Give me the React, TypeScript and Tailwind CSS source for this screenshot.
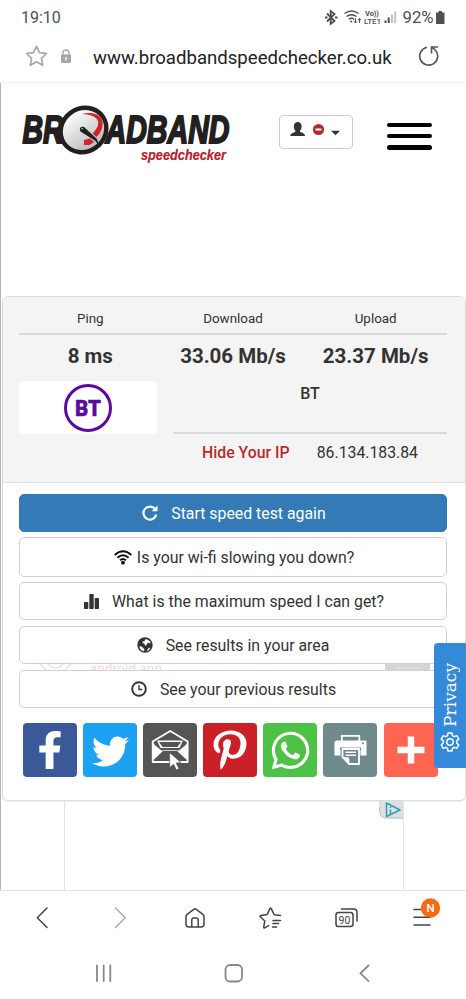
import React from 'react';
import { FaFacebookF, FaPinterestP, FaTwitter, FaWhatsapp } from 'react-icons/fa';

const StatusBar: React.FC = () => (
  <div className="flex h-9 shrink-0 items-center justify-between pl-[21px] pr-[20px] text-[#505050]">
    <span className="text-[16px] leading-none">19:10</span>
    <svg width="122" height="20" viewBox="325 8 122 20" fill="none" stroke="#505050">
      {/* bluetooth */}
      <path d="M328 13.500l7.500 7.500-3.800 3V11l3.800 3-7.500 7.500" strokeWidth="1.800" />
      <path d="M326 17.500h2.500M336 17.500h2.500" strokeWidth="2.200" />
      {/* wifi */}
      <path d="M345.500 13.500q7-5 14 0M347.500 16.500q5-3.500 10 0M349.700 19.200q2.800-2 5.600 0" strokeWidth="1.400" />
      <circle cx="352.300" cy="21.500" r="1" fill="#505050" stroke="none" />
      <path d="M356.500 18.500v4.500m-1.500-1.500l1.500 1.500 1.500-1.500M360.500 23v-4.500m-1.500 1.500l1.500-1.500 1.500 1.500" strokeWidth="1" />
      <g fill="#505050" stroke="none" fontFamily="Roboto, sans-serif">
        <text x="366" y="16.300" fontSize="7.500" fontWeight="700" textLength="14">Vo))</text>
        <text x="365" y="23.500" fontSize="8" fontWeight="500" textLength="17">LTE1</text>
        <rect x="385.500" y="20.500" width="2" height="2.500" />
        <rect x="388.700" y="17.500" width="2" height="5.500" />
        <rect x="392" y="14.500" width="2" height="8.500" fill="#c4c4c4" />
        <rect x="395.200" y="11.500" width="2" height="11.500" fill="#c4c4c4" />
        <text x="403.500" y="23.300" fontSize="16" textLength="31" lengthAdjust="spacingAndGlyphs">92%</text>
        <path d="M437 12.500h2.500V11h3.500v1.500h2.500v11.500H437z" />
      </g>
    </svg>
  </div>
);

const AddressBar: React.FC = () => (
  <div className="flex h-[47px] shrink-0 items-center border-b border-[#f1f1f1] pb-[6px] pl-[25px]">
    <svg width="23" height="22" viewBox="0 0 23 22" fill="none" stroke="#a6a6a6" strokeWidth="1.600" strokeLinejoin="round">
      <path d="M11.500 1.300l3 6.300 7 .9-5.100 4.800 1.300 7-6.200-3.500-6.200 3.500 1.300-7L1.500 8.500l7-.9z" />
    </svg>
    <svg className="ml-[12px]" width="12" height="14" viewBox="0 0 12 14">
      <path d="M3 6V4a3 3 0 0 1 6 0v2" fill="none" stroke="#aaa" strokeWidth="1.400" />
      <rect x="1" y="5.500" width="10" height="8.500" rx="1" fill="#a6a6a6" />
      <path d="M6 8v3.500" stroke="#fff" strokeWidth="1.300" />
    </svg>
    <span className="ml-[21px] w-[299px] whitespace-nowrap pt-[3px] text-[18.600px] leading-[20px] text-[#222]">
      www.broadbandspeedchecker.co.uk
    </span>
    <svg className="ml-[26px]" width="22" height="22" viewBox="0 0 22 22" fill="none" stroke="#555" strokeWidth="1.600">
      <path d="M9 2.300A9 9 0 1 0 17 4.700L14 2.500" />
      <path d="M20 2h-6.500v6.500" />
    </svg>
  </div>
);

const Logo: React.FC = () => (
  <svg className="overflow-visible" width="212" height="62" viewBox="20 104 212 62">
    <defs>
      <linearGradient id="dial" x1="0" y1="0" x2="0" y2="1">
        <stop offset="0" stopColor="#fff" />
        <stop offset="1" stopColor="#b7b9bb" />
      </linearGradient>
    </defs>
    <g fontFamily="'Liberation Sans', Arial, sans-serif" fontWeight="700" fontStyle="italic">
      <g fill="#231f20" stroke="#231f20" strokeWidth="2" fontSize="39">
        <text x="22.500" y="143" textLength="41" lengthAdjust="spacingAndGlyphs">BR</text>
        <text x="105.500" y="143" textLength="124" lengthAdjust="spacingAndGlyphs">ADBAND</text>
      </g>
      <text x="141" y="159.500" fontSize="15" fill="#b5202b" stroke="#b5202b" strokeWidth=".2" textLength="85" lengthAdjust="spacingAndGlyphs">
        speedchecker
      </text>
    </g>
    <ellipse cx="83.500" cy="130" rx="23.500" ry="21.500" transform="rotate(-35 83.500 130)" fill="url(#dial)" stroke="#231f20" strokeWidth="4.400" />
    <path d="M82 114c13-3.500 22 2 20.500 12-.8 5-3.500 8.500-6 11l-4-3.500c5-5 7-9.500 5-13.500-2.300-4-8-5.500-15.500-6z" fill="#d2232a" />
    <path d="M84 140l6-1.500 4 3.500-4.500 3H84z" fill="#d2232a" />
    <path d="M80.500 131.500l3.500-4.500 12.500 11.500 4.500 10-5.500-7.500z" fill="#231f20" />
    <circle cx="82.500" cy="129.300" r="2.600" fill="#231f20" />
    <circle cx="82.200" cy="128.800" r=".8" fill="#ccc" />
  </svg>
);

const SiteHeader: React.FC = () => (
  <header className="flex h-[213px] shrink-0 items-start pl-[19px] pt-[21px]">
    <Logo />
    <button className="ml-[47px] mt-[11px] flex h-[34px] w-[74px] items-center justify-center rounded-[4px] border border-[#ccc]" aria-label="Account">
      <svg className="shrink-0" width="72" height="32" viewBox="280 116 72 32">
        <path d="M293.800 126.500c0-3 1.500-4.500 3.900-4.500s3.900 1.500 3.900 4.500c0 2-.8 3.500-1.600 4.300v1c1.800.9 5 1.700 5 4.200h-14.600c0-2.500 3.200-3.300 5-4.200v-1c-.8-.8-1.600-2.300-1.600-4.300z" fill="#333" />
        <circle cx="318.500" cy="129.500" r="5.600" fill="#b02a33" />
        <path d="M315.500 129.500h6" stroke="#fff" strokeWidth="2" />
        <path d="M331 130.800h9l-4.500 4.500z" fill="#333" />
      </svg>
    </button>
    <div className="ml-[34px] mt-[18.500px] flex w-[45px] flex-col gap-[6.500px]">
      <span className="h-[4.700px] rounded-full bg-black" />
      <span className="h-[4.700px] rounded-full bg-black" />
      <span className="h-[4.700px] rounded-full bg-black" />
    </div>
  </header>
);

const Results: React.FC = () => (
  <section className="h-[186px] rounded-t-[6px] border-b border-[#dfe0e2] bg-[#f4f4f4] pl-[16px] pr-[18px] text-[#333]">
    <div className="grid h-[38px] grid-cols-3 border-b-2 border-[#d9dadb] pt-[14px] text-center text-[13.400px] leading-[15px]">
      <span>Ping</span>
      <span>Download</span>
      <span>Upload</span>
    </div>
    <div className="grid h-[45px] grid-cols-3 whitespace-nowrap pt-[9px] text-center text-[20.500px] font-bold leading-[24px]">
      <span>8 ms</span>
      <span>33.06 Mb/s</span>
      <span>23.37 Mb/s</span>
    </div>
    <div className="flex justify-between">
      <div className="mt-px flex h-[53px] w-[138px] items-center justify-center rounded-[4px] bg-white">
        <svg width="50" height="50" viewBox="0 0 50 50">
          <circle cx="25" cy="25" r="22.500" fill="none" stroke="#5a0a9c" strokeWidth="3" />
          <text x="12" y="33" fill="#5a0a9c" stroke="#5a0a9c" strokeWidth=".4" fontFamily="Roboto, sans-serif" fontSize="22" fontWeight="900" textLength="26" lengthAdjust="spacingAndGlyphs">
            BT
          </text>
        </svg>
      </div>
      <div className="w-[274px]">
        <div className="h-[54px] border-b-2 border-[#d9dadb] pt-[4px] text-center text-[16px] font-medium leading-[20px]">BT</div>
        <div className="flex justify-between whitespace-nowrap px-[29px] pt-[9px] text-[15.800px] leading-[20px]">
          <span className="font-medium text-[#b52b2b]">Hide Your IP</span>
          <span>86.134.183.84</span>
        </div>
      </div>
    </div>
  </section>
);

const RefreshIcon = () => (
  <svg width="16" height="16" viewBox="0 0 16 16" fill="none" stroke="#fff" strokeWidth="2.200">
    <path d="M13.200 4.200A6.500 6.500 0 1 0 14.300 9.500" />
    <path d="M15.500.5v5.800H9.700z" fill="#fff" stroke="none" />
  </svg>
);

const WifiIcon = () => (
  <svg width="18" height="15" viewBox="0 0 18 15" fill="none" stroke="#111" strokeWidth="1.900">
    <path d="M.7 5q8.300-7.300 16.600 0M3.400 7.700q5.600-4.900 11.200 0M6 10.300q3-2.600 6 0" />
    <circle cx="9" cy="12.700" r="1.900" fill="#111" stroke="none" />
  </svg>
);

const ChartIcon = () => (
  <svg width="16" height="15" viewBox="0 0 16 15" fill="#333">
    <rect x="0" y="8" width="4.300" height="7" rx=".7" />
    <rect x="5.300" y="0" width="4.400" height="15" rx=".7" />
    <rect x="10.700" y="4" width="4.300" height="11" rx=".7" />
  </svg>
);

const GlobeIcon = () => (
  <svg width="16" height="16" viewBox="0 0 16 16">
    <circle cx="8" cy="8" r="7.700" fill="#333" />
    <path d="M8.300 2.200l2.300.3 2.900 2.300-.3 1.700-1.900-.7-1.500 1-.2 1.700-1.700-.3-.7-1.700-1.700-.5.300-1.500 1.700-.3z" fill="#fff" />
    <path d="M2.300 9.300l2.200.3 2 1.600 1 1.500-.5 1.500-2.300-.8-1.800-2zM10.500 12.500l1.500-1.700 1.300.3-1.300 1.900-2.200 1.200z" fill="#fff" />
  </svg>
);

const ClockIcon = () => (
  <svg width="16" height="16" viewBox="0 0 16 16" fill="none" stroke="#333">
    <circle cx="8" cy="8" r="6.800" strokeWidth="1.900" />
    <path d="M8 4v4.500h3.300" strokeWidth="1.300" />
  </svg>
);

interface ActionButtonProps {
  icon: React.ReactNode;
  label: string;
  className: string;
}

const ActionButton: React.FC<ActionButtonProps> = ({ icon, label, className }) => (
  <button className={`flex w-full items-center justify-center whitespace-nowrap rounded-[5px] border text-[15.850px] leading-[20px] ${className}`}>
    {icon}
    <span className="pt-px">{label}</span>
  </button>
);

const Actions: React.FC = () => (
  <div className="pl-[16px] pr-[18px] pt-[11px]">
    <ActionButton icon={<RefreshIcon />} label="Start speed test again" className="h-[38px] gap-[13px] border-[#337ab7] bg-[#337ab7] pl-[2px] text-white" />
    <ActionButton icon={<WifiIcon />} label="Is your wi-fi slowing you down?" className="mt-[5px] h-[40px] gap-[5px] border-[#d0d1d2] bg-white pl-[2px] text-[#333]" />
    <ActionButton icon={<ChartIcon />} label="What is the maximum speed I can get?" className="mt-[5px] h-[38px] gap-[12px] border-[#d0d1d2] bg-white pl-[2px] text-[#333]" />
    <ActionButton icon={<GlobeIcon />} label="See results in your area" className="mt-[6px] h-[38px] gap-[13px] border-[#d0d1d2] bg-white text-[#333]" />
    {/* ad content showing through the gap */}
    <div className="flex h-[6px] items-end overflow-hidden pl-[21px]">
      <svg className="shrink-0" width="390" height="6" viewBox="40 664 390 6">
        <path d="M40 664l6 6M71 664l-6 6M48 664q8 8 15 0" fill="none" stroke="#f6dfd6" strokeWidth="1.500" />
        <text x="90" y="672.500" fontFamily="Roboto, sans-serif" fontSize="13" fill="#f0d8d8" textLength="72">android app</text>
        <path d="M385 664h45v6h-45z" fill="#d5d5d5" />
        <path d="M397 668h22" stroke="#e8e8e8" strokeDasharray="3 1" />
      </svg>
    </div>
    <ActionButton icon={<ClockIcon />} label="See your previous results" className="h-[38px] gap-[13px] border-[#d0d1d2] bg-white pl-[1px] text-[#333]" />
  </div>
);

const MailIcon = () => (
  <svg width="54" height="54" viewBox="143 723 54 54">
    <path d="M152.700 741.500v20.500h35v-20.500l-17.500-10.500z" fill="none" stroke="#fff" strokeWidth="1.800" strokeLinejoin="round" />
    <path d="M153 743l6.500 7.500h21.500l6.500-7.500v13l-7-5h-20l-7.500 5z" fill="#fff" />
    <path d="M153 760.500l10.500-10h13l11 10v-17l-9 7.500h-16.500l-9-7.500z" fill="#fff" />
    <path d="M155 760.800l9.500-7.300h12l9.500 7.300z" fill="#555" />
    <path d="M157 740.500h26l-3.500 7.500h-19z" fill="#fff" />
    <path d="M159 742h22l-3.500 5h-15z" fill="#555" />
    <path d="M169.500 752.500l11.500 10-4.800.5 2.800 5.700-2.700 1.300-2.700-5.700-3.800 3.200z" fill="#fff" stroke="#555" strokeWidth=".7" />
  </svg>
);

const PrintIcon = () => (
  <svg width="54" height="54" viewBox="324 723 54 54">
    <path d="M342.800 741v-5.200h17.500v5.200" fill="none" stroke="#fff" strokeWidth="1.800" />
    <path d="M337 740.500h29.500q1 0 1 1v14h-6v-6.500h-20v6.500h-6v-13.500z" fill="#fff" />
    <path d="M341 747.500h21v2.500h-21z" fill="#6e8a8b" />
    <path d="M343.500 749h16.500v15h-10l-6.500-7z" fill="#6e8a8b" stroke="#fff" strokeWidth="1.800" />
    <path d="M346.500 752.200h10.500M346.500 755.200h10.500" stroke="#fff" strokeWidth="1.400" />
    <path d="M342 756.500l8 1 .8 7.500z" fill="#fff" />
    <circle cx="364" cy="743.300" r="1" fill="#6e8a8b" />
  </svg>
);

const PlusIcon = () => (
  <svg width="28" height="28" viewBox="0 0 28 28" stroke="#fff" strokeWidth="6.500">
    <path d="M14 .5v27M.5 14h27" />
  </svg>
);

const tile = 'flex size-[54px] shrink-0 items-center justify-center rounded-[4px] text-white';

const ShareRow: React.FC = () => (
  <div className="mt-[15px] flex gap-[6.100px] pl-[20px]">
    <div className={`${tile} bg-[#3b5998]`}><FaFacebookF size={38} className="scale-x-105" /></div>
    <div className={`${tile} bg-[#1da1f2]`}><FaTwitter size={37} className="translate-y-[1px]" /></div>
    <div className={`${tile} bg-[#555]`}><MailIcon /></div>
    <div className={`${tile} bg-[#cb2027]`}><FaPinterestP size={40} className="scale-x-110" /></div>
    <div className={`${tile} bg-[#4dc247]`}><FaWhatsapp size={43} /></div>
    <div className={`${tile} bg-[#6e8a8b]`}><PrintIcon /></div>
    <div className={`${tile} bg-[#ff6550]`}><PlusIcon /></div>
  </div>
);

const PrivacyTab: React.FC = () => (
  <div className="absolute right-0 top-[643px] flex h-[125px] w-[32px] flex-col items-center justify-end gap-[5px] rounded-l-[4px] bg-[#3489d8] pb-[16px] text-white">
    <span className="rotate-180 font-['DejaVu_Serif',serif] text-[17px] leading-[20px] [writing-mode:vertical-rl]">Privacy</span>
    <svg width="20" height="20" viewBox="0 0 20 20" fill="none" stroke="#fff" strokeWidth="1.400" strokeLinejoin="round">
      <path d="M8 1h4l.5 2.700 1.700 1 2.600-1 2 3.400-2.100 1.800v2.200l2.100 1.800-2 3.400-2.600-1-1.700 1L12 19H8l-.5-2.700-1.700-1-2.600 1-2-3.400 2.100-1.800V8.900L1.200 7.100l2-3.400 2.600 1 1.700-1z" />
      <circle cx="10" cy="10" r="3.200" />
    </svg>
  </div>
);

const AdSlot: React.FC = () => (
  <div className="ml-[63px] flex h-[89px] w-[340px] justify-end border-x border-[#e2e3e4]">
    <svg width="24" height="18" viewBox="0 0 24 18">
      <path d="M0 0h24v17.500H7Q0 17 0 9z" fill="#dedfe1" />
      <path d="M.5 6v3q0 7.500 7 8h16.500" fill="none" stroke="#bfc1c3" />
      <path d="M7.500 2l13.500 7-13.500 6.500z" fill="none" stroke="#2d9fb4" strokeWidth="1.500" strokeLinejoin="round" />
      <path d="M11.500 8.500V13M11.500 5.500v1.500" stroke="#2d9fb4" strokeWidth="1.500" />
    </svg>
  </div>
);

const BrowserToolbar: React.FC = () => (
  <nav className="h-[55px] shrink-0 border-t border-[#e3e3e3]">
    <svg width="466" height="54" viewBox="0 891 466 54" fill="none" stroke="#444" strokeWidth="1.500" strokeLinecap="round" strokeLinejoin="round">
      <path d="M47 908l-9.700 9.700L47 927.500" />
      <path d="M115.500 908l9.700 9.700-9.700 9.800" stroke="#aaa" />
      <path d="M186 916.500c0-1 .4-1.700 1.100-2.200l6.700-5c.8-.6 1.700-.6 2.500 0l6.600 5c.7.500 1.100 1.200 1.100 2.200v7.500c0 1.800-1 3-3 3h-12c-2 0-3-1.200-3-3z" />
      <path d="M191.800 926.500V920c0-1.300.7-2 2-2h2.400c1.300 0 2 .7 2 2v6.500" />
      <path d="M280.500 915.500l-6.300-.8-3-6c-.5-.8-.9-.8-1.300 0l-2.800 5.900-6.300.9c-.9.100-1.100.6-.5 1.200l4.500 4.300-1.100 6c-.2.900.3 1.200 1 .8l4-2.200M273 920.500h7.500M273 923.500h5.500M272.500 927h4" />
      <rect x="336" y="912.500" width="17" height="14" rx="2.500" />
      <path d="M341.500 909h12c2.500 0 3.500 1.200 3.500 3.500v8.500" />
      <text x="338.500" y="923.500" fill="#444" stroke="none" fontFamily="Roboto, sans-serif" fontSize="10.500" textLength="12">90</text>
      <path d="M414 909.500h16M414 917.200h16M414 925h16" />
      <circle cx="430.500" cy="908" r="9.700" fill="#f56b13" stroke="none" />
      <text x="430.500" y="912" textAnchor="middle" fill="#fff" stroke="none" fontFamily="Roboto, sans-serif" fontSize="11.500" fontWeight="500">N</text>
    </svg>
  </nav>
);

const SystemNav: React.FC = () => (
  <nav className="h-[54px] shrink-0">
    <svg width="466" height="54" viewBox="0 945 466 54" fill="none" stroke="#888" strokeWidth="1.800" strokeLinecap="round">
      <path d="M97 965.500v15.500M103.700 965.500v15.500M110.300 965.500v15.500" />
      <rect x="225.500" y="965" width="16.500" height="16.500" rx="4.500" />
      <path d="M368.500 965.500l-8 7.800 8 7.800" />
    </svg>
  </nav>
);

const App: React.FC = () => (
  <div className="relative flex h-[999px] w-[466px] flex-col overflow-hidden bg-white font-['Roboto',sans-serif]">
    <StatusBar />
    <AddressBar />
    <main className="h-[807px] shrink-0 border-l border-[#b5b5b5]">
      <SiteHeader />
      <div className="ml-px h-[505px] w-[464px] rounded-[6px] border border-[#dcddde] bg-white shadow-[0_1px_1px_rgba(0,0,0,0.06)]">
        <Results />
        <Actions />
        <ShareRow />
      </div>
      <AdSlot />
    </main>
    <BrowserToolbar />
    <SystemNav />
    <PrivacyTab />
  </div>
);

export default App;
